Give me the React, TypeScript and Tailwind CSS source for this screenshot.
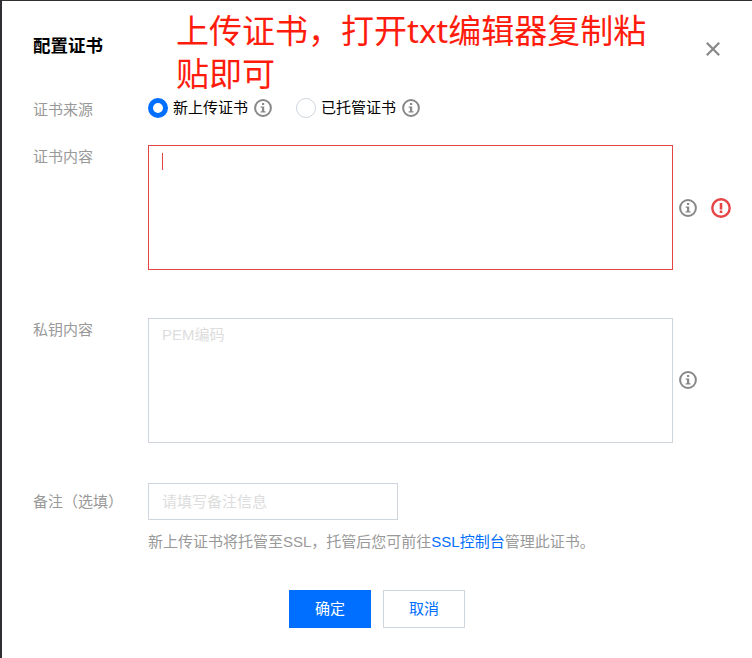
import type { ReactNode } from "react";

function InfoIcon() {
  return (
    <svg width="18" height="18" viewBox="0 0 18 18" fill="none" className="block shrink-0">
      <circle cx="9" cy="9" r="7.9" stroke="#888" strokeWidth="2" />
      <path d="M8 4h2.2v2H8zM6.7 7.4h3.5v4.8h1.3v1.4H6.6v-1.4H8V8.8H6.7z" fill="#888" />
    </svg>
  );
}

function ErrorIcon() {
  return (
    <svg width="20" height="20" viewBox="0 0 20 20" fill="none" className="block shrink-0">
      <circle cx="10" cy="10" r="8.7" stroke="#e54545" strokeWidth="2.4" />
      <path d="M8.7 5h2.6v6.4H8.7zM8.7 12.6h2.6V15H8.7z" fill="#e54545" />
    </svg>
  );
}

function Radio({ checked, children }: { checked?: boolean; children: ReactNode }) {
  return (
    <label className="flex items-center">
      <span
        className={
          checked
            ? "h-5 w-5 rounded-full border-5 border-[#006eff] bg-white"
            : "h-5 w-5 rounded-full border border-[#cfd5de] bg-white"
        }
      />
      <span className="ml-[5px] mr-1.5 text-black">{children}</span>
      <InfoIcon />
    </label>
  );
}

function Field({
  label,
  className,
  labelClass,
  children,
}: {
  label: string;
  className?: string;
  labelClass?: string;
  children: ReactNode;
}) {
  return (
    <div className={`flex ${className ?? ""}`}>
      <div className={`w-[115px] shrink-0 whitespace-nowrap ${labelClass ?? ""}`}>{label}</div>
      {children}
    </div>
  );
}

export default function App() {
  return (
    <div className="relative h-[658px] w-[752px] overflow-hidden border-l-2 border-t border-[#303034] bg-white pl-[31px] font-['Liberation_Sans','Noto_Sans_CJK_SC',sans-serif] text-[15px] leading-[22px] text-[#999]">
      <header className="flex h-24 justify-between pr-8">
        <h3 className="mt-[34px] text-[17.5px] font-bold text-black">配置证书</h3>
        <button aria-label="关闭" className="mt-[41px] h-[14px] w-[14px]">
          <svg width="14" height="14" viewBox="0 0 14 14" fill="none" className="block">
            <path d="M.8.8l12.4 12.4M13.2.8L.8 13.2" stroke="#888" strokeWidth="2.2" />
          </svg>
        </button>
      </header>

      <Field label="证书来源" className="h-[22px]" labelClass="pt-0.5">
        <div className="flex h-[22px] gap-6">
          <Radio checked>新上传证书</Radio>
          <Radio>已托管证书</Radio>
        </div>
      </Field>

      <Field label="证书内容" className="mt-[26px]" labelClass="pt-px">
        <div className="flex items-center">
          <div className="relative h-[125px] w-[525px]">
            <textarea className="block h-full w-full resize-none border border-[#e54545] px-[13px] py-[5px] outline-none" />
            {/* text caret */}
            <span className="absolute left-[14px] top-2 h-[17px] w-px bg-[#e54545]" />
          </div>
          <span className="ml-1.5 mr-3.5">
            <InfoIcon />
          </span>
          <ErrorIcon />
        </div>
      </Field>

      <Field label="私钥内容" className="mt-12" labelClass="pt-px">
        <div className="flex items-center">
          <textarea
            placeholder="PEM编码"
            className="block h-[125px] w-[525px] resize-none border border-[#cfd5de] px-[13px] py-[5px] outline-none placeholder:text-[#ddd]"
          />
          <span className="mb-px ml-1.5">
            <InfoIcon />
          </span>
        </div>
      </Field>

      <Field label="备注（选填）" className="mt-10" labelClass="pt-2">
        <div>
          <input
            placeholder="请填写备注信息"
            className="block h-[37px] w-[250px] border border-[#cfd5de] px-[13px] outline-none placeholder:text-[#ddd]"
          />
          <p className="mt-[11px] whitespace-nowrap">
            新上传证书将托管至SSL，托管后您可前往
            <a className="text-[#006eff]">SSL控制台</a>
            管理此证书。
          </p>
        </div>
      </Field>

      <footer className="ml-64 mt-[37px] flex gap-3">
        <button className="h-[38px] w-[82px] bg-[#006eff] text-white">确定</button>
        <button className="h-[38px] w-[82px] border border-[#cfd5de] text-[#006eff]">取消</button>
      </footer>

      {/* red note written over the dialog */}
      <p className="absolute left-[174px] top-2 w-[480px] font-['Noto_Sans','Noto_Sans_CJK_SC',sans-serif] text-[33px] leading-[43px] text-[#ff1c0d]">
        上传证书，打开txt编辑器复制粘
        <br />
        贴即可
      </p>
    </div>
  );
}
